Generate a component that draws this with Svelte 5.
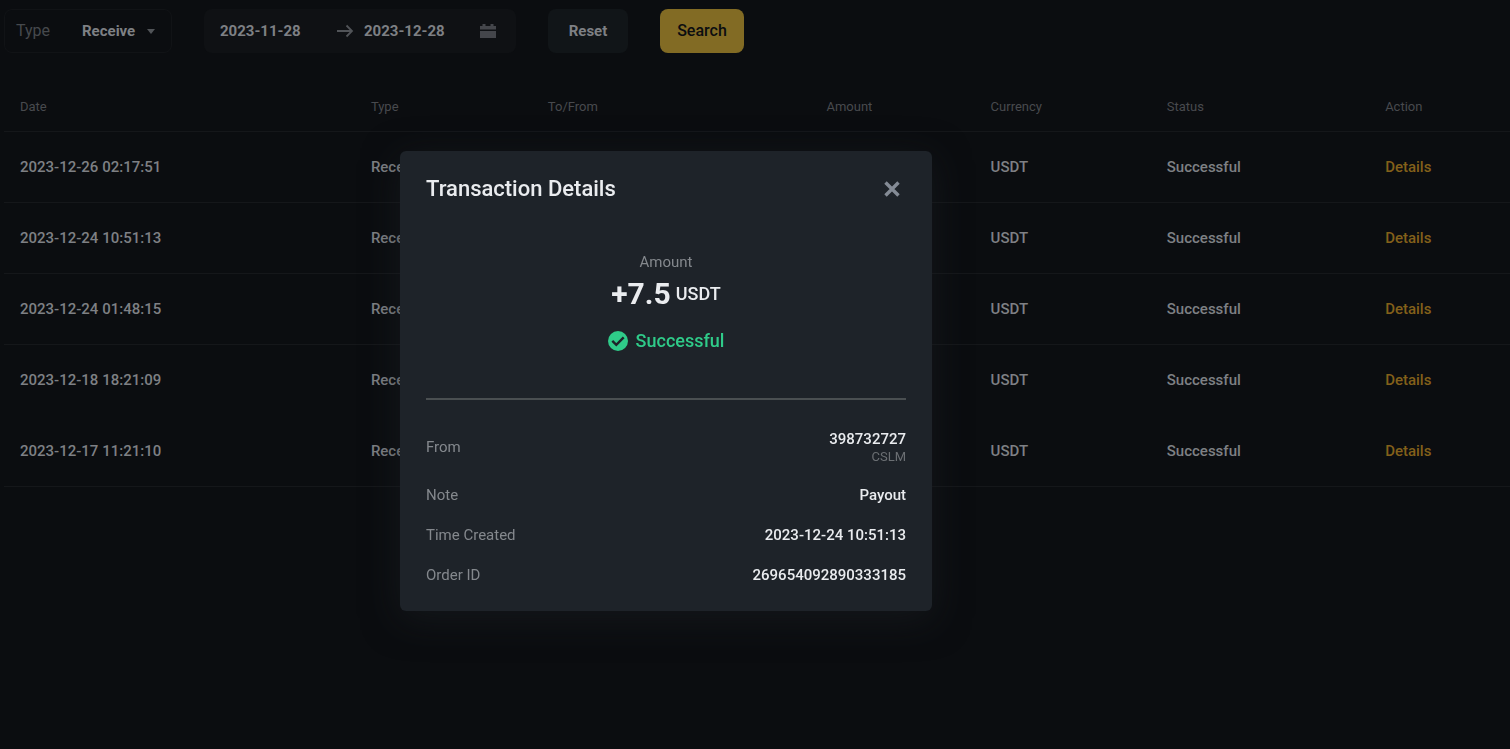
<script lang="ts">
	interface Transaction {
		date: string;
		type: string;
		counterparty?: string;
		amount?: string;
		currency: string;
		status: string;
	}

	const base = { type: 'Receive', currency: 'USDT', status: 'Successful' };

	const transactions: Transaction[] = [
		{ date: '2023-12-26 02:17:51', ...base },
		{ date: '2023-12-24 10:51:13', ...base },
		{ date: '2023-12-24 01:48:15', ...base },
		{ date: '2023-12-18 18:21:09', ...base },
		{ date: '2023-12-17 11:21:10', ...base }
	];

	let type = $state('Receive');
	let from = $state('2023-11-28');
	let to = $state('2023-12-28');
	let open = $state(true);

	function reset() {
		from = '2023-11-28';
		to = '2023-12-28';
	}

	function showDetails(e: MouseEvent) {
		e.preventDefault();
		open = true;
	}
</script>

<main>
	<form class="filters" onsubmit={(e) => e.preventDefault()}>
		<div class="field type-field">
			<label for="type">Type</label>
			<select id="type" bind:value={type}>
				<option>Receive</option>
			</select>
			<svg class="caret" width="8" height="5" viewBox="0 0 8 5" aria-hidden="true">
				<path d="M0 0h8L4 5z" fill="currentColor" />
			</svg>
		</div>

		<div class="field range">
			<input type="text" aria-label="Start date" bind:value={from} />
			<svg width="18" height="14" viewBox="0 0 18 14" aria-hidden="true">
				<path d="M1 7h15M10.500 1.500 16 7l-5.500 5.500" fill="none" stroke="currentColor" stroke-width="1.800" />
			</svg>
			<input type="text" aria-label="End date" bind:value={to} />
			<svg class="calendar" width="16" height="14" viewBox="0 0 16 14" aria-hidden="true">
				<path d="M0 2h2.500V0h3v2h5V0h3v2H16v3.500H0zM0 7h16v7H0z" fill="currentColor" />
			</svg>
		</div>

		<button type="button" class="btn" onclick={reset}>Reset</button>
		<button type="submit" class="btn primary">Search</button>
	</form>

	<table>
		<thead>
			<tr>
				<th class="date">Date</th>
				<th class="kind">Type</th>
				<th class="party">To/From</th>
				<th class="amount">Amount</th>
				<th class="currency">Currency</th>
				<th class="status">Status</th>
				<th>Action</th>
			</tr>
		</thead>
		<tbody>
			{#each transactions as tx}
				<tr>
					<td>{tx.date}</td>
					<td>{tx.type}</td>
					<td>{tx.counterparty ?? ''}</td>
					<td>{tx.amount ?? ''}</td>
					<td>{tx.currency}</td>
					<td>{tx.status}</td>
					<td><a href="#details" onclick={showDetails}>Details</a></td>
				</tr>
			{/each}
		</tbody>
	</table>
</main>

{#if open}
	<div class="overlay">
		<div class="modal" role="dialog" aria-modal="true" aria-labelledby="modal-title">
			<header>
				<h2 id="modal-title">Transaction Details</h2>
				<button type="button" class="close" aria-label="Close" onclick={() => (open = false)}>
					<svg width="16" height="16" viewBox="0 0 16 16" aria-hidden="true">
						<path d="M1.500 1.500l13 13M14.500 1.500l-13 13" stroke="currentColor" stroke-width="3.400" />
					</svg>
				</button>
			</header>

			<div class="summary">
				<span class="caption">Amount</span>
				<p class="total"><strong>+7.5</strong> <span>USDT</span></p>
				<p class="result">
					<svg width="20" height="20" viewBox="0 0 20 20" aria-hidden="true">
						<circle cx="10" cy="10" r="10" fill="#2fcb89" />
						<path d="M4.300 9.800l4 4 7.400-7.400" fill="none" stroke="#1e2329" stroke-width="2.400" />
					</svg>
					Successful
				</p>
			</div>

			<dl>
				<div>
					<dt>From</dt>
					<dd>398732727<small>CSLM</small></dd>
				</div>
				<div>
					<dt>Note</dt>
					<dd>Payout</dd>
				</div>
				<div>
					<dt>Time Created</dt>
					<dd>2023-12-24 10:51:13</dd>
				</div>
				<div>
					<dt>Order ID</dt>
					<dd>269654092890333185</dd>
				</div>
			</dl>
		</div>
	</div>
{/if}

<style>
	:global(body) {
		background: #0b0d10;
		color: #7e8084;
		font-family: Roboto, 'Liberation Sans', sans-serif;
		font-size: 15px;
		line-height: 20px;
	}

	main {
		padding: 9px 0 0 4px;
	}

	.filters {
		display: flex;
		align-items: center;
		gap: 32px;
		margin-bottom: 31px;
	}

	.field {
		display: flex;
		align-items: center;
		box-sizing: border-box;
		height: 44px;
		padding: 0 16px;
		border-radius: 8px;
	}

	.type-field {
		width: 168px;
		padding: 0 16px 0 11px;
		border: 1px solid #111316;
	}

	.type-field label {
		width: 66px;
		color: #46494d;
		font-size: 16px;
	}

	select,
	input {
		min-width: 0;
		padding: 0;
		border: 0;
		outline: 0;
		appearance: none;
		background: transparent;
		color: #7e8084;
		font: inherit;
		font-weight: 700;
	}

	select {
		flex: 1;
	}

	.caret {
		color: #515458;
	}

	.range {
		width: 312px;
		background: #0f1114;
		color: #515458;
	}

	.range input {
		width: 116px;
	}

	.range svg + input {
		margin-left: 10px;
	}

	.calendar {
		color: #44464b;
	}

	.btn {
		width: 80px;
		height: 44px;
		padding: 0;
		border: 0;
		border-radius: 8px;
		background: #111518;
		color: #7e8084;
		font: inherit;
		font-weight: 700;
		cursor: pointer;
	}

	.btn.primary {
		width: 84px;
		background: #826b24;
		color: #0b0d10;
		font-size: 16px;
		font-weight: 500;
	}

	table {
		width: 100%;
		border-collapse: collapse;
		table-layout: fixed;
		text-align: left;
	}

	th,
	td {
		box-sizing: border-box;
		padding: 0 16px;
		border-bottom: 1px solid #15171a;
	}

	th {
		height: 47px;
		color: #484a4e;
		font-size: 13px;
		font-weight: 400;
	}

	td {
		height: 71px;
		font-weight: 500;
	}

	tr:nth-last-child(2) td {
		border-bottom-color: transparent;
	}

	.date {
		width: 23.3%;
	}

	.kind {
		width: 11.75%;
	}

	.party {
		width: 18.5%;
	}

	.amount {
		width: 10.9%;
	}

	.currency {
		width: 11.7%;
	}

	.status {
		width: 14.5%;
	}

	td a {
		color: #83601a;
		text-decoration: none;
	}

	.overlay {
		position: fixed;
		inset: 0;
		display: flex;
		align-items: center;
		justify-content: center;
		padding: 13px 178px 0 0;
	}

	.modal {
		box-sizing: border-box;
		width: 532px;
		padding: 21px 26px 26px;
		border-radius: 6px;
		background: #1e2329;
		box-shadow: 0 8px 36px rgb(30 34 38 / 50%);
		color: #eaecef;
	}

	header {
		display: flex;
		align-items: center;
		justify-content: space-between;
	}

	h2 {
		margin: 0;
		font-size: 22px;
		font-weight: 500;
		line-height: 34px;
	}

	.close {
		display: flex;
		padding: 6px;
		border: 0;
		background: none;
		color: #848b95;
		cursor: pointer;
	}

	.summary {
		display: flex;
		flex-direction: column;
		align-items: center;
		padding: 46px 0 37px;
		border-bottom: 2px solid #4a4f51;
	}

	.caption {
		color: #84888d;
	}

	.summary p {
		margin: 0;
	}

	.total {
		display: flex;
		align-items: center;
		gap: 5px;
		font-size: 18px;
		font-weight: 500;
		line-height: 44px;
	}

	.total strong {
		font-size: 30px;
		font-weight: 700;
	}

	.summary .result {
		display: flex;
		align-items: center;
		gap: 8px;
		margin-top: 5px;
		color: #2fcb89;
		font-size: 18px;
		font-weight: 500;
		line-height: 40px;
	}

	dl {
		margin: 0;
		padding-top: 29px;
	}

	dl div {
		display: flex;
		align-items: center;
		justify-content: space-between;
		margin-bottom: 20px;
	}

	dl div:last-child {
		margin-bottom: 0;
	}

	dt {
		color: #84888d;
	}

	dd {
		margin: 0;
		font-weight: 500;
		text-align: right;
	}

	small {
		display: block;
		color: #6b6f73;
		font-size: 13px;
		font-weight: 400;
		line-height: 16px;
	}
</style>
